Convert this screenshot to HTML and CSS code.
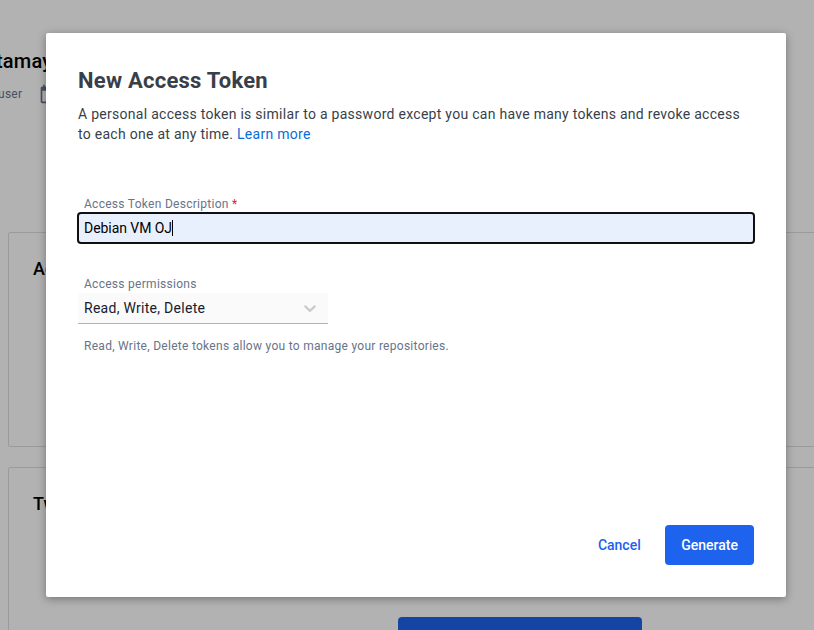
FILE: index.html
```html
<!DOCTYPE html>
<html lang="en">
<head>
<meta charset="utf-8">
<title>New Access Token</title>
<link rel="stylesheet" href="styles.css">
</head>
<body>
<div class="page">
  <header class="profile">
    <div class="profile-name">tamay</div>
    <div class="profile-meta">
      <span class="profile-role">user</span>
      <svg class="calendar" viewBox="0 0 24 24" width="20" height="20"><path d="M20 3h-1V1h-2v2H7V1H5v2H4c-1.100 0-2 .9-2 2v16c0 1.100.9 2 2 2h16c1.100 0 2-.9 2-2V5c0-1.100-.9-2-2-2zm0 18H4V8h16v13z"/></svg>
    </div>
  </header>
  <section class="card card-tokens"><h2>Ac</h2></section>
  <section class="card card-auth"><h2>Tw</h2><div class="card-button"></div></section>
</div>
<div class="overlay">
  <div class="modal" role="dialog">
    <h1>New Access Token</h1>
    <p class="intro">A personal access token is similar to a password except you can have many tokens and revoke access<br>to each one at any time. <a>Learn more</a></p>
    <div class="label">Access Token Description <span class="required">*</span></div>
    <div class="input"><span>Debian VM OJ</span><i class="caret"></i></div>
    <div class="label label-permissions">Access permissions</div>
    <div class="select">
      <span>Read, Write, Delete</span>
      <svg viewBox="0 0 20 20" width="20" height="20"><path d="M4.516 7.548c0.436-0.446 1.043-0.481 1.576 0l3.908 3.747 3.908-3.747c0.533-0.481 1.141-0.446 1.574 0 0.436 0.445 0.408 1.197 0 1.615-0.406 0.418-4.695 4.502-4.695 4.502-0.217 0.223-0.502 0.335-0.787 0.335s-0.570-0.112-0.789-0.335c0 0-4.287-4.084-4.695-4.502s-0.436-1.170 0-1.615z"/></svg>
    </div>
    <p class="help">Read, Write, Delete tokens allow you to manage your repositories.</p>
    <div class="actions">
      <button class="cancel">Cancel</button>
      <button class="generate">Generate</button>
    </div>
  </div>
</div>
</body>
</html>
```
FILE: styles.css
```css
* { box-sizing: border-box; }
body {
  margin: 0;
  height: 630px;
  overflow: hidden;
  font-family: Roboto, sans-serif;
  background: #fff;
}
h1, h2, p { margin: 0; }
.page {
  height: 630px;
  overflow: hidden;
  padding-left: 8px;
}
.profile {
  height: 232px;
  padding-top: 48px;
  margin-left: -10px;
}
.profile-name {
  margin-left: -2px;
  font-size: 20px;
  line-height: 26px;
  font-weight: 500;
  letter-spacing: 0.2px;
  color: #000;
}
.profile-meta {
  display: flex;
  align-items: center;
  height: 20px;
  margin-top: 10px;
  font-size: 12px;
  letter-spacing: 0.28px;
  color: #677489;
}
.profile-role { width: 40.500px; }
.calendar { fill: #677489; }
.card {
  width: 830px;
  border: 1px solid #dedede;
  border-radius: 2px;
  padding: 24px;
}
.card h2 {
  font-size: 18px;
  line-height: 24px;
  font-weight: 500;
}
.card-tokens { height: 215px; }
.card-auth { height: 200px; margin-top: 20px; }
.card-button {
  width: 244px;
  height: 40px;
  margin: 101px 0 0 365px;
  border-radius: 4px;
  background: #1d63ed;
}
.overlay {
  position: absolute;
  inset: 0;
  padding: 33px 28px 33px 46px;
  background: rgba(0, 0, 0, 0.3);
}
.modal {
  display: flex;
  flex-direction: column;
  height: 564px;
  padding: 32px;
  border-radius: 2px;
  background: #fff;
  box-shadow: 0 2px 8px rgba(0, 0, 0, 0.35);
}
h1 {
  padding-top: 1px;
  font-size: 22px;
  line-height: 30px;
  font-weight: 700;
  letter-spacing: 0.24px;
  color: #393f49;
}
.intro {
  margin-top: 8px;
  font-size: 14px;
  line-height: 20px;
  letter-spacing: 0.28px;
  white-space: nowrap;
  color: #393f49;
}
.intro a { color: #086dd7; }
.label {
  margin-top: 52px;
  padding-left: 6px;
  font-size: 12px;
  line-height: 16px;
  letter-spacing: 0.28px;
  color: #677489;
}
.required { color: #d52536; }
.input {
  display: flex;
  align-items: center;
  height: 32px;
  margin: 0 -1px;
  padding-left: 5px;
  border: 2px solid #101010;
  border-radius: 4px;
  background: #e8f0fe;
  font-size: 14px;
  letter-spacing: -0.06px;
  color: #000;
}
.caret {
  width: 1px;
  height: 16px;
  background: #000;
}
.label-permissions { margin-top: 32px; }
.select {
  display: flex;
  align-items: center;
  justify-content: space-between;
  width: 250px;
  height: 31px;
  margin-top: 1px;
  padding: 0 8px 0 6px;
  border-bottom: 1px solid #b3b3b3;
  background: #fafafa;
  font-size: 14px;
  letter-spacing: 0.28px;
  color: #17202c;
}
.select svg { fill: #ccc; }
.help {
  margin-top: 14px;
  padding-left: 6px;
  font-size: 12px;
  line-height: 16px;
  letter-spacing: 0.28px;
  color: #677489;
}
.actions {
  display: flex;
  justify-content: flex-end;
  gap: 8.500px;
  margin-top: auto;
}
button {
  height: 40px;
  padding: 0 16px;
  border: 0;
  border-radius: 4px;
  font: 500 14px Roboto, sans-serif;
}
.cancel { background: transparent; color: #1d63ed; }
.generate { background: #1d63ed; color: #fff; }
```
